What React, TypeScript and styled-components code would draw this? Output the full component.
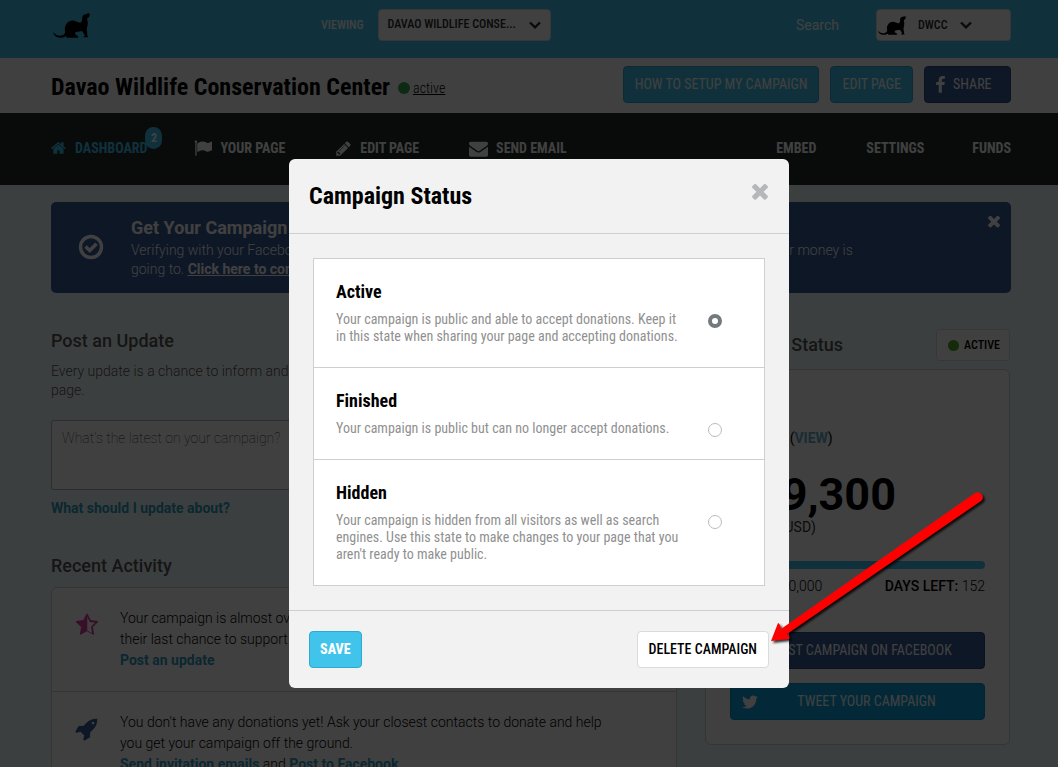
import React from "react";
import styled, { createGlobalStyle, css } from "styled-components";

const condensed = `"Roboto Condensed", "Liberation Sans Narrow", Roboto, sans-serif`;

const palette = {
  sky: "#40c4ec",
  skyEdge: "#2fa9d0",
  facebook: "#385c98",
  facebookEdge: "#2c4a80",
  twitter: "#0ca4e0",
  nav: "#202c28",
  page: "#f0fcfc",
  link: "#2f9cc0",
  line: "#ccd0d0",
};

const GlobalStyle = createGlobalStyle`
  *, *::before, *::after { box-sizing: border-box; }
  html { height: 100%; }
  body {
    margin: 0;
    min-height: 100%;
    overflow: hidden;
    background: ${palette.page};
    color: #000;
    font: 300 14px/21px Roboto, sans-serif;
  }
  h1, h2, h3, p { margin: 0; }
  button, input, select, textarea { font: inherit; }
`;

/* ---------- icons ---------- */

const glyphs = {
  home: "M1408 992v480q0 26-19 45t-45 19h-384v-384h-256v384h-384q-26 0-45-19t-19-45v-480q0-1 .5-3t.5-3l575-474 575 474q1 2 1 6zm223-69l-62 74q-8 9-21 11h-3q-13 0-21-7l-692-577-692 577q-12 8-24 7-13-2-21-11l-62-74q-8-10-7-23.5t11-21.5l719-599q32-26 76-26t76 26l244 204v-195q0-14 9-23t23-9h192q14 0 23 9t9 23v408l219 182q10 8 11 21.5t-7 23.5z",
  times: "M1490 1322q0 40-28 68l-136 136q-28 28-68 28t-68-28l-294-294-294 294q-28 28-68 28t-68-28l-136-136q-28-28-28-68t28-68l294-294-294-294q-28-28-28-68t28-68l136-136q28-28 68-28t68 28l294 294 294-294q28-28 68-28t68 28l136 136q28 28 28 68t-28 68l-294 294 294 294q28 28 28 68z",
  pencil: "M491 1536l91-91-235-235-91 91v107h128v128h107zm523-928q0-22-22-22-10 0-17 7l-542 542q-7 7-7 17 0 22 22 22 10 0 17-7l542-542q7-7 7-17zm-54-192l416 416-832 832h-416v-416zm683 96q0 53-37 90l-166 166-416-416 166-165q36-38 90-38 53 0 91 38l235 234q37 39 37 91z",
  flag: "M320 256q0 72-64 110v1266q0 13-9.5 22.5t-22.5 9.5h-64q-13 0-22.5-9.5t-9.5-22.5v-1266q-64-38-64-110 0-53 37.5-90.5t90.5-37.5 90.5 37.5 37.5 90.5zm1472 64v763q0 25-12.5 38.5t-39.5 27.5q-215 116-369 116-61 0-123.5-22t-108.5-48-115.5-48-142.5-22q-192 0-464 146-17 9-33 9-26 0-45-19t-19-45v-742q0-32 31-55 21-14 79-43 236-120 421-120 107 0 200 29t219 88q38 19 88 19 54 0 117.5-21t110-47 88-47 54.5-21q26 0 45 19t19 45z",
  envelope: "M1792 710v794q0 66-47 113t-113 47h-1472q-66 0-113-47t-47-113v-794q44 49 101 87 362 246 497 345 57 42 92.5 65.5t94.5 48 110 24.5h2q51 0 110-24.5t94.5-48 92.5-65.5q170-123 498-345 57-39 100-87zm0-294q0 79-49 151t-122 123q-376 261-468 325-10 7-42.5 31t-54 38.5-52 32.5-57.5 27-50 9h-2q-23 0-50-9t-57.5-27-52-32.5-54-38.5-42.5-31q-91-64-262-182.5t-205-142.5q-62-42-117-115.5t-55-136.5q0-78 41.5-130t118.5-52h1472q65 0 112.5 47t47.5 113z",
  facebook: "M1343 12v264h-157q-86 0-116 36t-30 108v189h293l-39 296h-254v759h-306v-759h-255v-296h255v-218q0-186 104-288.5t277-102.5q147 0 228 12z",
  twitter: "M1684 408q-67 98-162 167 1 14 1 42 0 130-38 259.5t-115.5 248.5-184.5 210.5-258 146-323 54.5q-271 0-496-145 35 4 78 4 225 0 401-138-105-2-188-64.5t-114-159.5q33 5 61 5 43 0 85-11-112-23-185.5-111.5t-73.5-205.5v-4q68 38 146 41-66-44-105-115t-39-154q0-88 44-163 121 149 294.5 238.5t371.5 99.5q-8-38-8-74 0-134 94.5-228.5t228.5-94.5q140 0 236 102 109-21 205-78-37 115-142 178 93-10 186-50z",
  rocket: "M1440 448q0-40-28-68t-68-28-68 28-28 68 28 68 68 28 68-28 28-68zm224-288q0 249-75.5 430.5t-253.5 360.5q-81 80-195 176l-20 379q-2 16-16 26l-384 224q-7 4-16 4-12 0-23-9l-64-64q-13-14-8-32l85-276-281-281-276 85q-3 1-9 1-14 0-23-9l-64-64q-17-19-5-39l224-384q10-14 26-16l379-20q96-114 176-195 188-187 358-258t431-71q14 0 24 9.5t10 22.5z",
  halfStar: "M1250 957l238-233-329-48-66-12-31-60-147-298v1001l59 31 294 155-56-328-12-66zm452-262l-363 354 86 500q5 33-6 51.5t-34 18.5q-17 0-40-12l-449-236-449 236q-23 12-40 12-23 0-34-18.5t-6-51.5l86-500-364-354q-32-32-23-59.5t54-34.5l502-73 225-455q20-41 49-41 28 0 49 41l225 455 502 73q45 7 54 34.5t-24 59.5z",
};

const Svg = styled.svg`
  display: block;
  flex: none;
  fill: currentColor;
`;

function Icon({ name, size }: { name: keyof typeof glyphs; size: number }) {
  // the facebook glyph is half as wide as the others
  const narrow = name === "facebook";
  return (
    <Svg
      width={narrow ? size / 2 : size}
      height={size}
      viewBox={narrow ? "463 0 896 1792" : "0 0 1792 1792"}
      aria-hidden="true"
    >
      <path d={glyphs[name]} />
    </Svg>
  );
}

function Weasel({ width, height }: { width: number; height: number }) {
  return (
    <Svg width={width} height={height} viewBox="0 0 112 76" preserveAspectRatio="none" aria-hidden="true">
      <path d="M90 8C94 3 99 5 102 2L110 1L111 6L109 12L103 17C106 27 106 38 102 49L104 66L106 74H92L94 70L97 69L88 55C84 56 76 56 67 59C66 64 70 68 76 70V75H41L40 70C32 76 20 77 11 73C5 70 1 65 1 58C6 66 14 70 22 69C31 68 37 64 37 56C33 46 38 32 48 26C57 20 66 23 74 27C80 30 84 30 86 27C90 21 87 13 90 8Z" />
    </Svg>
  );
}

function Chevron() {
  return (
    <Svg width="12" height="8" viewBox="0 0 12 8" aria-hidden="true">
      <path d="M1 1.5L6 6.3L11 1.5" fill="none" stroke="currentColor" strokeWidth="2.4" />
    </Svg>
  );
}

function CheckCircle() {
  return (
    <Svg width="26" height="26" viewBox="0 0 26 26" aria-hidden="true">
      <circle cx="13" cy="13" r="10.5" fill="none" stroke="currentColor" strokeWidth="3.4" />
      <path d="M7.5 12.5L11.8 16.6L18.5 9.8" fill="none" stroke="currentColor" strokeWidth="3.6" />
    </Svg>
  );
}

/* ---------- shared ---------- */

const gutters = css`
  padding-left: 51px;
  padding-right: 47px;
`;

const Spacer = styled.span`
  flex: 1;
`;

const Dot = styled.span<{ $size: number; $color: string }>`
  flex: none;
  width: ${(p) => p.$size}px;
  height: ${(p) => p.$size}px;
  border-radius: 50%;
  background: ${(p) => p.$color};
`;

const tones = {
  sky: css`
    background: ${palette.sky};
    border-color: ${palette.skyEdge};
    color: #fff;
  `,
  facebook: css`
    background: ${palette.facebook};
    border-color: ${palette.facebookEdge};
    color: #fff;
  `,
  twitter: css`
    background: ${palette.twitter};
    border-color: #0894cc;
    color: #fff;
  `,
  plain: css`
    background: #fff;
    border-color: #d8dcdc;
    color: #000;
  `,
};

const Button = styled.button<{ $tone: keyof typeof tones; $weight?: number }>`
  display: flex;
  align-items: center;
  height: 37px;
  padding: 0 10px;
  border: 1px solid;
  border-radius: 4px;
  font: ${(p) => p.$weight ?? 400} 14px/17px ${condensed};
  white-space: nowrap;
  cursor: pointer;
  ${(p) => tones[p.$tone]}
`;

const WideButton = styled(Button)`
  padding: 0 11px;
`;

const CloseButton = styled.button`
  display: flex;
  padding: 0;
  border: 0;
  background: none;
  color: inherit;
  cursor: pointer;
`;

/* ---------- top bar ---------- */

const TopBar = styled.header`
  ${gutters}
  display: flex;
  align-items: flex-start;
  height: 58px;
  padding-top: 9px;
  background: ${palette.sky};
  color: #fff;
`;

const Logo = styled.a`
  width: 270px;
  padding: 4px 2px;
  color: #000;
`;

const Viewing = styled.label`
  display: flex;
  align-items: center;
  gap: 14px;
  font: 500 12px/32px ${condensed};
`;

const SelectFrame = styled.span`
  position: relative;
  display: block;
  width: 173px;
  color: #2a2a2a;
`;

const ViewingSelect = styled.select`
  appearance: none;
  display: block;
  width: 100%;
  height: 32px;
  padding: 0 32px 2px 9px;
  border: 1px solid #d8dcdc;
  border-radius: 4px;
  background: #fff;
  color: #2a2a2a;
  font: 500 12px/16px ${condensed};
  text-overflow: ellipsis;
`;

const SelectArrow = styled.span`
  position: absolute;
  right: 10px;
  top: 12px;
  pointer-events: none;
`;

const TopRight = styled.div`
  flex: 1;
  display: flex;
  justify-content: flex-end;
  gap: 37px;
`;

const SearchLink = styled.a`
  color: #fff;
  font-weight: 400;
  line-height: 32px;
  text-decoration: none;
`;

const AccountButton = styled.button`
  display: flex;
  align-items: center;
  gap: 12px;
  width: 135px;
  height: 32px;
  padding: 0 1px;
  border: 1px solid #d8dcdc;
  border-radius: 4px;
  background: #fff;
  color: #2a2a2a;
  font: 500 12px/16px ${condensed};
`;

const AccountLogo = styled.span`
  color: #000;
`;

/* ---------- title row and navigation ---------- */

const TitleRow = styled.div`
  ${gutters}
  display: flex;
  align-items: center;
  gap: 11px;
  height: 55px;
  padding-bottom: 2px;
  background: #fff;
`;

const CampaignName = styled.h1`
  padding-top: 4px;
  font: 700 24px/32px ${condensed};
  white-space: nowrap;
`;

const StateLink = styled.a`
  display: flex;
  flex: 1;
  align-items: center;
  gap: 3px;
  margin-left: -3px;
  padding-top: 6px;
  color: #000;
  font: 300 14px/20px ${condensed};
`;

const ShareButton = styled(WideButton)`
  gap: 8px;
  width: 87px;
`;

const Nav = styled.nav`
  ${gutters}
  display: flex;
  align-items: center;
  height: 72px;
  padding-bottom: 2px;
  background: ${palette.nav};
`;

const NavLink = styled.a<{ $current?: boolean; $gap: number }>`
  position: relative;
  display: flex;
  align-items: center;
  gap: 8px;
  margin-right: ${(p) => p.$gap}px;
  color: ${(p) => (p.$current ? palette.sky : "#fff")};
  font: 700 14px/20px ${condensed};
  text-decoration: none;
  white-space: nowrap;
`;

const Badge = styled.span`
  position: absolute;
  right: -15px;
  top: -11px;
  width: 17px;
  border-radius: 9px;
  background: ${palette.sky};
  color: #fff;
  font-size: 12px;
  line-height: 22px;
  text-align: center;
`;

/* ---------- page body ---------- */

const Main = styled.main`
  ${gutters}
  padding-top: 17px;
`;

const Banner = styled.section`
  display: flex;
  align-items: flex-start;
  height: 91px;
  padding: 10px 8px 0 27px;
  border-radius: 5px;
  background: ${palette.facebook};
  color: #fff;
`;

const BannerIcon = styled.span`
  padding-top: 22px;
`;

const BannerText = styled.div`
  flex: 1;
  padding: 5px 80px 0 27px;
  line-height: 19px;
`;

const BannerTitle = styled.h2`
  padding-bottom: 3px;
  font-size: 18px;
  font-weight: 700;
  line-height: 21px;
`;

const BannerLink = styled.a`
  color: #fff;
  font-weight: 700;
`;

const Columns = styled.div`
  display: grid;
  grid-template-columns: minmax(0, 1fr) 305px;
  gap: 28px;
  padding: 36px 1px 0 0;
`;

const Heading = styled.h2`
  color: #555;
  font-size: 18px;
  font-weight: 500;
  line-height: 24px;
`;

const Hint = styled.p`
  padding: 9px 0 20px;
  line-height: 19px;
  color: #555;
`;

const UpdateBox = styled.textarea`
  display: block;
  width: 100%;
  height: 70px;
  padding: 7px 10px;
  border: 1px solid #b0b4b4;
  border-radius: 3px;
  background: #fff;
  resize: none;
  &::placeholder {
    color: #333;
    font-weight: 100;
    opacity: 1;
  }
`;

const StrongLink = styled.a`
  color: ${palette.link};
  font-weight: 700;
  text-decoration: none;
`;

const ViewLink = styled(StrongLink)`
  color: #66b0cc;
`;

const UpdateHelp = styled.p`
  padding: 8px 0 35px;
`;

const Activity = styled.ul`
  margin: 9px 0 0;
  padding: 0;
  border: 1px solid ${palette.line};
  border-radius: 6px;
  background: #fff;
  list-style: none;
`;

const ActivityItem = styled.li<{ $tint: string }>`
  display: flex;
  gap: 21px;
  padding: 20px 60px 20px 23px;
  & + & {
    border-top: 1px solid ${palette.line};
  }
  > span {
    padding-top: 5px;
    color: ${(p) => p.$tint};
  }
`;

const StatusHead = styled.div`
  display: flex;
  align-items: center;
  justify-content: space-between;
  height: 32px;
`;

const StateButton = styled(Button)`
  gap: 5px;
  height: 32px;
  padding: 0 9px 0 11px;
  font-size: 12px;
`;

const StatusCard = styled.section`
  margin-top: 8px;
  padding: 58px 24px 24px;
  border: 1px solid ${palette.line};
  border-radius: 6px;
  background: #fff;
`;

const Donors = styled.p`
  font-weight: 400;
`;

const Amount = styled.p`
  padding-top: 20px;
  font-size: 45px;
  font-weight: 700;
  line-height: 51px;
`;

const Currency = styled.p`
  color: #333;
  font-weight: 400;
  line-height: 14px;
`;

const Progress = styled.div`
  height: 8px;
  margin-top: 27px;
  border-radius: 4px;
  background: ${palette.sky};
`;

const Facts = styled.p`
  display: flex;
  justify-content: space-between;
  padding: 7px 0 35px;
  b {
    font-weight: 500;
  }
`;

const SocialButton = styled(Button)`
  width: 100%;
  > span {
    flex: 1;
    text-align: center;
  }
  & + & {
    margin-top: 14px;
  }
`;

/* ---------- dialog ---------- */

const Backdrop = styled.div`
  position: fixed;
  inset: 0;
  display: flex;
  align-items: flex-start;
  justify-content: center;
  padding: 159px 0 0 20px;
  background: rgba(0, 0, 0, 0.75);
`;

const Dialog = styled.form`
  width: 500px;
  border-radius: 6px;
  background: #f2f2f2;
`;

const DialogHead = styled.div`
  display: flex;
  align-items: flex-start;
  justify-content: space-between;
  height: 75px;
  padding: 20px 17px 0 20px;
  border-bottom: 1px solid ${palette.line};
  color: #b4b8ba;
`;

const DialogTitle = styled.h2`
  color: #000;
  font: 700 24px/34px ${condensed};
`;

const Options = styled.div`
  margin: 24px;
  border: 1px solid ${palette.line};
  background: #fff;
`;

const Option = styled.label`
  display: flex;
  justify-content: space-between;
  padding: 23px 42px 22px 22px;
  & + & {
    border-top: 1px solid ${palette.line};
  }
`;

const OptionText = styled.span`
  display: block;
  width: 344px;
  color: #909090;
  font: 400 14px/17px ${condensed};
`;

const OptionName = styled.span`
  display: block;
  padding-bottom: 9px;
  color: #000;
  font-size: 18px;
  font-weight: 700;
  line-height: 20px;
`;

const Radio = styled.input`
  appearance: none;
  flex: none;
  width: 14px;
  height: 14px;
  margin: 32px 0 0;
  border: 1px solid #bbb;
  border-radius: 50%;
  background: #fff;
  &:checked {
    border: 4px solid #737a7e;
  }
`;

const DialogFoot = styled.div`
  display: flex;
  justify-content: space-between;
  padding: 20px;
  border-top: 1px solid ${palette.line};
`;

const DeleteWrap = styled.div`
  position: relative;
`;

const Arrow = styled.svg`
  position: absolute;
  left: 100%;
  bottom: 20px;
  overflow: visible;
  filter: drop-shadow(2px 2px 1px rgba(0, 0, 0, 0.8));
  pointer-events: none;
`;

const states = [
  {
    name: "Active",
    text: "Your campaign is public and able to accept donations. Keep it in this state when sharing your page and accepting donations.",
  },
  { name: "Finished", text: "Your campaign is public but can no longer accept donations." },
  {
    name: "Hidden",
    text: "Your campaign is hidden from all visitors as well as search engines. Use this state to make changes to your page that you aren't ready to make public.",
  },
];

export default function App() {
  return (
    <>
      <GlobalStyle />
      <TopBar>
        <Logo href="#" aria-label="Home">
          <Weasel width={37} height={25} />
        </Logo>
        <Viewing>
          VIEWING
          <SelectFrame>
            <ViewingSelect>
              <option>DAVAO WILDLIFE CONSE...</option>
            </ViewingSelect>
            <SelectArrow>
              <Chevron />
            </SelectArrow>
          </SelectFrame>
        </Viewing>
        <TopRight>
          <SearchLink href="#">Search</SearchLink>
          <AccountButton type="button">
            <AccountLogo>
              <Weasel width={28} height={19} />
            </AccountLogo>
            DWCC
            <Chevron />
          </AccountButton>
        </TopRight>
      </TopBar>

      <TitleRow>
        <CampaignName>Davao Wildlife Conservation Center</CampaignName>
        <StateLink href="#">
          <Dot $size={12} $color="#34a853" />
          active
        </StateLink>
        <WideButton $tone="sky" type="button">HOW TO SETUP MY CAMPAIGN</WideButton>
        <WideButton $tone="sky" type="button">EDIT PAGE</WideButton>
        <ShareButton $tone="facebook" type="button">
          <Icon name="facebook" size={18} />
          SHARE
        </ShareButton>
      </TitleRow>

      <Nav>
        <NavLink href="#" $current $gap={47}>
          <Icon name="home" size={16} />
          DASHBOARD
          <Badge>2</Badge>
        </NavLink>
        <NavLink href="#" $gap={50}>
          <Icon name="flag" size={18} />
          YOUR PAGE
        </NavLink>
        <NavLink href="#" $gap={50}>
          <Icon name="pencil" size={17} />
          EDIT PAGE
        </NavLink>
        <NavLink href="#" $gap={0}>
          <Icon name="envelope" size={19} />
          SEND EMAIL
        </NavLink>
        <Spacer />
        <NavLink href="#" $gap={50}>EMBED</NavLink>
        <NavLink href="#" $gap={48}>SETTINGS</NavLink>
        <NavLink href="#" $gap={0}>FUNDS</NavLink>
      </Nav>

      <Main>
        <Banner>
          <BannerIcon>
            <CheckCircle />
          </BannerIcon>
          <BannerText>
            <BannerTitle>Get Your Campaign Verified</BannerTitle>
            <p>
              Verifying with your Facebook account will let all of your supporters know who you are and exactly where
              their money is
              <br />
              going to. <BannerLink href="#">Click here to connect</BannerLink>
            </p>
          </BannerText>
          <CloseButton type="button" aria-label="Dismiss">
            <Icon name="times" size={18} />
          </CloseButton>
        </Banner>

        <Columns>
          <div>
            <Heading as="label" htmlFor="update">Post an Update</Heading>
            <Hint>
              Every update is a chance to inform and engage people who visit your
              <br />
              page.
            </Hint>
            <UpdateBox id="update" placeholder="What's the latest on your campaign?" />
            <UpdateHelp>
              <StrongLink href="#">What should I update about?</StrongLink>
            </UpdateHelp>
            <Heading>Recent Activity</Heading>
            <Activity>
              <ActivityItem $tint="#e03ca0">
                <span>
                  <Icon name="halfStar" size={24} />
                </span>
                <p>
                  Your campaign is almost over! Let everyone know it is
                  <br />
                  their last chance to support you.
                  <br />
                  <StrongLink href="#">Post an update</StrongLink>
                </p>
              </ActivityItem>
              <ActivityItem $tint={palette.facebook}>
                <span>
                  <Icon name="rocket" size={24} />
                </span>
                <p>
                  You don't have any donations yet! Ask your closest contacts to donate and help
                  <br />
                  you get your campaign off the ground.
                  <br />
                  <StrongLink href="#">Send invitation emails</StrongLink> and{" "}
                  <StrongLink href="#">Post to Facebook</StrongLink>
                </p>
              </ActivityItem>
            </Activity>
          </div>

          <aside>
            <StatusHead>
              <Heading>Campaign Status</Heading>
              <StateButton $tone="plain" $weight={500} type="button">
                <Dot $size={11} $color="#4caa20" />
                ACTIVE
              </StateButton>
            </StatusHead>
            <StatusCard>
              <Donors>
                0 Donors (<ViewLink href="#">VIEW</ViewLink>)
              </Donors>
              <Amount>$19,300</Amount>
              <Currency>Funded (USD)</Currency>
              <Progress />
              <Facts>
                <span>
                  <b>GOAL:</b> $10,000
                </span>
                <span>
                  <b>DAYS LEFT:</b> 152
                </span>
              </Facts>
              <SocialButton $tone="facebook" type="button">
                <Icon name="facebook" size={18} />
                <span>POST CAMPAIGN ON FACEBOOK</span>
              </SocialButton>
              <SocialButton $tone="twitter" type="button">
                <Icon name="twitter" size={18} />
                <span>TWEET YOUR CAMPAIGN</span>
              </SocialButton>
            </StatusCard>
          </aside>
        </Columns>
      </Main>

      <Backdrop>
        <Dialog role="dialog" aria-labelledby="dialog-title">
          <DialogHead>
            <DialogTitle id="dialog-title">Campaign Status</DialogTitle>
            <CloseButton type="button" aria-label="Close">
              <Icon name="times" size={24} />
            </CloseButton>
          </DialogHead>
          <Options role="radiogroup" aria-labelledby="dialog-title">
            {states.map((s, i) => (
              <Option key={s.name}>
                <OptionText>
                  <OptionName>{s.name}</OptionName>
                  {s.text}
                </OptionText>
                <Radio type="radio" name="state" value={s.name} defaultChecked={i === 0} />
              </Option>
            ))}
          </Options>
          <DialogFoot>
            <Button $tone="sky" $weight={800} type="button">SAVE</Button>
            <DeleteWrap>
              <WideButton $tone="plain" $weight={500} type="button">DELETE CAMPAIGN</WideButton>
              <Arrow width="216" height="156" viewBox="0 0 216 156" aria-hidden="true">
                <path
                  fill="#f00"
                  d="M2 149L9 131Q11 131 12 137L206 1C211 -2 217 5 212 9L18 142Q22 145 20 147Z"
                />
              </Arrow>
            </DeleteWrap>
          </DialogFoot>
        </Dialog>
      </Backdrop>
    </>
  );
}
